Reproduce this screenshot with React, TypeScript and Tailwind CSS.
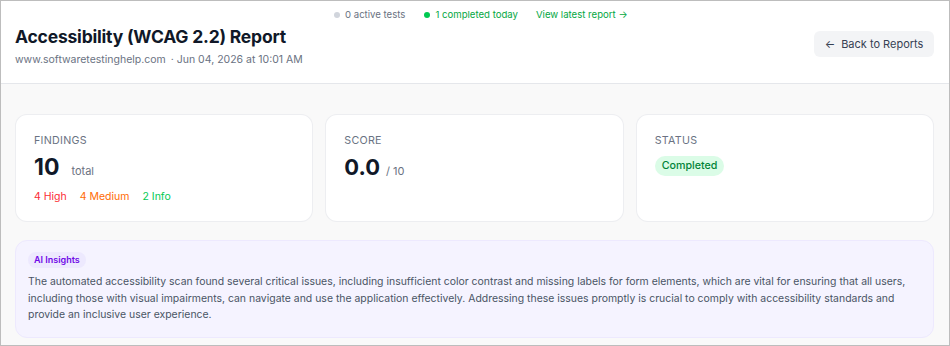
import React from "react";

const font = { fontFamily: "Inter, 'Noto Sans', sans-serif" };

function StatCard({ label, children }: { label: string; children: React.ReactNode }) {
    return (
        <div className="bg-white rounded-xl border border-gray-200/70 h-[108px] px-[18px] pt-[18px]">
            <div className="text-[10.7px] tracking-wide text-gray-500 uppercase leading-4">{label}</div>
            {children}
        </div>
    );
}

export default function App() {
    return (
        <div className="w-[950px] h-[346px] border border-[#bdbdbd] bg-[#f9f9f9] overflow-hidden" style={font}>
            {/* header */}
            <div className="bg-white border-b border-gray-200 h-[83px] pl-[14px] pr-[14px] relative">
                <div className="absolute left-[333px] top-[6px] flex items-center text-[9.6px] leading-4">
                    <span className="flex items-center gap-[5px] text-gray-500">
                        <span className="w-[6px] h-[6px] rounded-full bg-gray-300"></span>
                        0 active tests
                    </span>
                    <span className="flex items-center gap-[5px] text-green-600 ml-[19px]">
                        <span className="w-[6px] h-[6px] rounded-full bg-green-500"></span>
                        1 completed today
                    </span>
                    <span className="text-green-600 ml-[18px]">View latest report →</span>
                </div>
                <div className="flex items-start justify-between pt-[24px]">
                    <div>
                        <h1 className="text-[17.5px] font-bold text-gray-900 leading-6 tracking-[-0.2px]">
                            Accessibility (WCAG 2.2) Report
                        </h1>
                        <div className="text-[10.5px] text-gray-500 mt-[3px] leading-4">
                            www.softwaretestinghelp.com <span className="ml-[2px]">· Jun 04, 2026 at 10:01 AM</span>
                        </div>
                    </div>
                    <button className="mt-[6px] mr-[1px] h-[26px] w-[120px] rounded-md bg-gray-100 text-gray-700 text-[11px] flex items-center justify-center gap-[6px]">
                        <span className="text-[11px]">←</span>
                        Back to Reports
                    </button>
                </div>
            </div>

            {/* body */}
            <div className="pl-[14px] pr-[15px] pt-[30px]">
                <div className="grid grid-cols-3 gap-[12px]">
                    <StatCard label="Findings">
                        <div className="flex items-baseline mt-[4px]">
                            <span className="text-[23px] font-bold text-gray-900 leading-7">10</span>
                            <span className="text-[11px] text-gray-500 ml-[12px]">total</span>
                        </div>
                        <div className="flex gap-[13px] text-[10.5px] mt-[8px] leading-4">
                            <span className="text-red-500">4 High</span>
                            <span className="text-orange-500">4 Medium</span>
                            <span className="text-green-500">2 Info</span>
                        </div>
                    </StatCard>
                    <StatCard label="Score">
                        <div className="flex items-baseline mt-[4px]">
                            <span className="text-[22px] font-bold text-gray-900 leading-7">0.0</span>
                            <span className="text-[11px] text-gray-500 ml-[6px]">/ 10</span>
                        </div>
                    </StatCard>
                    <StatCard label="Status">
                        <div className="mt-[2px]">
                            <span className="inline-block rounded-full bg-green-100 text-green-700 text-[10.7px] font-medium px-[7px] py-[2px] leading-4">
                                Completed
                            </span>
                        </div>
                    </StatCard>
                </div>

                <div className="mt-[18px] rounded-xl border border-violet-100 bg-[#f5f3ff] px-[12px] pt-[11px] pb-[12px] h-[98px]">
                    <div className="w-fit rounded-full bg-violet-100 text-violet-700 text-[9px] font-semibold px-[6px] py-[2px] leading-[12px]">
                        AI Insights
                    </div>
                    <p className="text-[10.45px] text-gray-600 leading-[16.5px] mt-[6px]">
                        The automated accessibility scan found several critical issues, including insufficient color contrast and missing labels for form elements, which are vital for ensuring that all users, including those with visual impairments, can navigate and use the application effectively. Addressing these issues promptly is crucial to comply with accessibility standards and provide an inclusive user experience.
                    </p>
                </div>
            </div>
        </div>
    );
}
